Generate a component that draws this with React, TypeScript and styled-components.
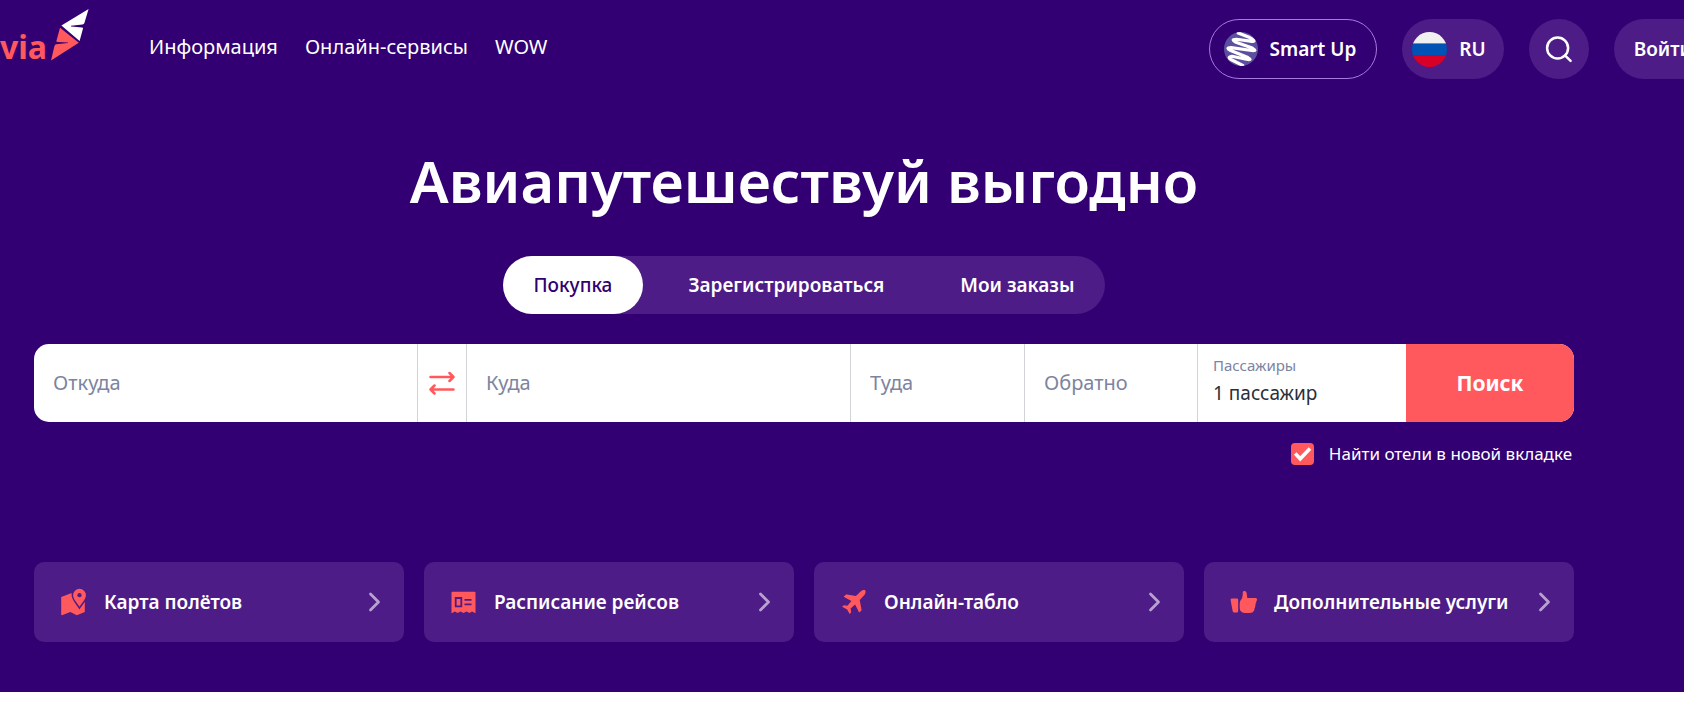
import React, { useState } from "react";
import styled, { createGlobalStyle, css } from "styled-components";

const color = {
  base: "#320072",
  panel: "#4d1c86",
  coral: "#ff595e",
  outline: "#a77be0",
  muted: "#7d84a0",
  line: "#d3d3da",
  ink: "#2b2f38",
};

const GlobalStyle = createGlobalStyle`
  *, *::before, *::after { box-sizing: border-box; }
  body {
    margin: 0;
    background: #fff;
    font-family: "Noto Sans", "Open Sans", sans-serif;
    font-size: 19px;
    line-height: 24px;
    color: #fff;
  }
  button, input { font: inherit; }
  button { border: 0; padding: 0; cursor: pointer; color: inherit; background: none; }
  a { color: inherit; text-decoration: none; }
  svg { display: block; flex: none; }
`;

const Hero = styled.div`
  background: ${color.base};
  overflow: hidden;
  padding-bottom: 50px;
`;

const Header = styled.header`
  display: flex;
  align-items: center;
  margin-right: -28px;
  padding-top: 19px;
  white-space: nowrap;
`;

const Logo = styled.a`
  display: flex;
  align-items: flex-end;
  gap: 4px;
  height: 52px;
  margin: -28px 60px 0 0;
  color: ${color.coral};
  font-size: 32px;
  font-weight: 700;
  line-height: 28px;
`;

const Nav = styled.nav`
  display: flex;
  flex: 1;
  gap: 27px;
  margin-top: -4px;
  font-size: 20px;
`;

const Actions = styled.div`
  display: flex;
  gap: 25px;
`;

const Pill = styled.button<{ $outlined?: boolean; $pad: string }>`
  display: flex;
  align-items: center;
  justify-content: center;
  gap: 12px;
  height: 60px;
  min-width: 60px;
  padding: ${(p) => p.$pad};
  border-radius: 30px;
  font-weight: 600;
  background: ${color.panel};
  ${(p) =>
    p.$outlined &&
    css`
      background: transparent;
      border: 1px solid ${color.outline};
    `}
`;

const Content = styled.main`
  padding: 0 110px 0 34px;
`;

const Title = styled.h1`
  margin: 66px 0 0;
  font-size: 58px;
  line-height: 72px;
  font-weight: 600;
  text-align: center;
`;

const Tabs = styled.div`
  display: flex;
  width: fit-content;
  margin: 39px auto 0;
  border-radius: 29px;
  background: ${color.panel};
`;

const Tab = styled.button<{ $active?: boolean }>`
  height: 58px;
  padding: 0 31px;
  border-radius: 29px;
  font-weight: 600;
  & + & { margin-left: 14px; }
  ${(p) =>
    p.$active &&
    css`
      background: #fff;
      color: ${color.base};
      font-weight: 500;
    `}
`;

const SearchForm = styled.form`
  display: grid;
  grid-template-columns:
    minmax(0, 384fr) 49px minmax(0, 384fr) minmax(0, 174fr) minmax(0, 173fr)
    minmax(0, 208fr) 168px;
  height: 78px;
  margin-top: 30px;
  border-radius: 15px;
  overflow: hidden;
  background: #fff;
`;

const Field = styled.input`
  width: 100%;
  min-width: 0;
  padding: 0 19px;
  border: 0;
  border-right: 1px solid ${color.line};
  outline: 0;
  background: none;
  color: ${color.ink};
  font-size: 20px;
  &::placeholder { color: ${color.muted}; opacity: 1; }
`;

const SwapButton = styled.button`
  display: grid;
  place-items: center;
  border-right: 1px solid ${color.line};
`;

const Passengers = styled.button`
  display: flex;
  flex-direction: column;
  justify-content: center;
  gap: 6px;
  padding: 0 15px 6px;
  text-align: left;
  color: ${color.ink};
`;

const PassengersLabel = styled.span`
  font-size: 15px;
  line-height: 20px;
  color: ${color.muted};
`;

const Submit = styled.button`
  background: ${color.coral};
  font-size: 21px;
  font-weight: 700;
`;

const HotelOption = styled.label`
  display: flex;
  align-items: center;
  gap: 15px;
  width: fit-content;
  margin: 20px 2px 0 auto;
  font-size: 17px;
  cursor: pointer;
`;

const CheckSlot = styled.span`
  display: grid;
  place-items: center;
  & > * { grid-area: 1 / 1; }
  & > svg { pointer-events: none; }
`;

const CheckBox = styled.input`
  appearance: none;
  width: 23px;
  height: 22px;
  margin: 0;
  border-radius: 4px;
  background: #fff;
  &:checked { background: ${color.coral}; }
`;

const Cards = styled.nav`
  display: grid;
  grid-template-columns: repeat(4, minmax(0, 1fr));
  gap: 20px;
  margin-top: 96px;
`;

const Card = styled.a`
  display: flex;
  align-items: center;
  gap: 16px;
  height: 80px;
  padding: 0 23px 0 26px;
  border-radius: 10px;
  background: ${color.panel};
  font-weight: 600;
  white-space: nowrap;
`;

const CardText = styled.span`
  flex: 1;
`;

const LogoMark = () => (
  <svg width="38" height="52" viewBox="51 9 38 52" aria-hidden="true">
    <path fill="#fff" d="M88.6 9 61.4 25.6 79.6 41l3.4-12.600q.2-.9-1-1L71 26.400v-.6l11.500-1.300q1.500-.2 1.900-1.500z" />
    <path fill={color.coral} d="M60 27.700 78.800 42.800 51 60.500l3.400-14.300q.4-1.700 1.900-1.900L68 43v-.6l-10.600-.5q-1.200-.1-1-1z" />
  </svg>
);

const SmartUpMark = () => (
  <svg width="34" height="34" viewBox="0 0 34 34" aria-hidden="true">
    <clipPath id="smart-up-disc">
      <circle cx="17" cy="17" r="17" />
    </clipPath>
    <g clipPath="url(#smart-up-disc)">
      <rect width="34" height="34" fill="#5c4f9f" />
      <path
        d="M12 1.500 24 4.500Q33 8 25 8L11 8Q5 9 11 11L28 14.500Q34 17 28 17L7 17Q1 18 7 20L25 24.500Q30 26.500 25 26.500L9 25.500Q4 27 9 29L21 33"
        fill="none"
        stroke="#fff"
        strokeWidth="3.200"
        strokeLinecap="round"
        strokeLinejoin="round"
        transform="rotate(8 17 17)"
      />
    </g>
  </svg>
);

const RussiaFlag = () => (
  <svg width="35" height="35" viewBox="0 0 35 35" aria-hidden="true">
    <clipPath id="flag-disc">
      <circle cx="17.500" cy="17.500" r="17.500" />
    </clipPath>
    <g clipPath="url(#flag-disc)">
      <rect width="35" height="12" fill="#f0f0f0" />
      <rect y="11.400" width="35" height="12.300" fill="#0052b4" />
      <rect y="23.700" width="35" height="12" fill="#d80027" />
    </g>
  </svg>
);

const SearchIcon = () => (
  <svg width="28" height="28" viewBox="0 0 28 28" fill="none" stroke="#fff" strokeWidth="2.500" strokeLinecap="round" aria-hidden="true">
    <circle cx="12.600" cy="13" r="10.500" />
    <path d="m20.200 20.600 5.400 5.200" />
  </svg>
);

const SwapIcon = () => (
  <svg width="26" height="24" viewBox="0 0 26 24" fill="none" stroke={color.coral} strokeWidth="2.500" strokeLinecap="round" strokeLinejoin="round" aria-hidden="true">
    <path d="M1.500 6H24.500M20.500 2l4 4-4 4M24.500 18.500H1.500M5.500 14.500l-4 4 4 4" />
  </svg>
);

const CheckIcon = () => (
  <svg width="19" height="16" viewBox="0 0 19 16" fill="none" stroke="#fff" strokeWidth="3.600" aria-hidden="true">
    <path d="m2.200 7.600 5 5.200L17 2.600" />
  </svg>
);

const ChevronIcon = () => (
  <svg width="13" height="20" viewBox="0 0 13 20" fill="none" stroke="#b7a2cf" strokeWidth="2.800" strokeLinecap="round" strokeLinejoin="round" aria-hidden="true">
    <path d="m2.500 2 8 8-8 8" />
  </svg>
);

const MapIcon = () => (
  <svg width="28" height="28" viewBox="0 0 28 28" aria-hidden="true">
    <path fill={color.coral} d="M1.200 9 11 5.200 24.800 14V24L16.800 27.200 10.300 24 2 27.200Q1.200 27.200 1.200 26.300z" />
    <path
      fill={color.coral}
      stroke={color.panel}
      strokeWidth="3"
      paintOrder="stroke"
      d="M19.500.8a6.400 6.400 0 0 1 6.400 6.400c0 3.700-3.800 7.600-6.400 11.500-2.600-3.900-6.400-7.800-6.400-11.500A6.400 6.400 0 0 1 19.500.8z"
    />
    <circle cx="19.500" cy="7.200" r="2.100" fill={color.panel} />
  </svg>
);

const ScheduleIcon = () => (
  <svg width="28" height="28" viewBox="0 0 28 28" aria-hidden="true">
    <path fill={color.coral} d="M2.500 3.800H24.500Q25.500 3.800 25.500 4.800V25.200L22 23.400 19.500 25 16.500 23.400 13.500 25 10.500 23.400 7.500 25 5 23.400 1.500 25.200V4.800Q1.500 3.800 2.500 3.800z" />
    <g fill="none" stroke={color.panel} strokeWidth="1.800">
      <path d="M5.700 10H11.300V18.300H5.700zM14.500 11.800H21.500M14.500 16.300H21.500" />
    </g>
  </svg>
);

const PlaneIcon = () => (
  <svg width="28" height="28" viewBox="0 0 28 28" fill={color.coral} aria-hidden="true">
    <path d="M25.200 2.300c.8.900.3 3.300-.8 4.600l-4.700 5.200 1.800 9.400c.1.700-.1 1.100-.5 1.500l-1.900 1.600-4-8.100-4.500 4 .6 3.800-1.500 1.700-2.600-4.600-5-2.600 1.700-1.600 3.600.5 4-4.600-7.700-4.300 1.800-1.900c.4-.4.900-.5 1.500-.4l8.900 1.600 5-4.900c1.300-1.200 3.500-1.600 4.300-.9z" />
  </svg>
);

const ThumbIcon = () => (
  <svg width="28" height="28" viewBox="0 0 28 28" fill={color.coral} aria-hidden="true">
    <path d="M1.600 10.600H6.800Q8.200 10.600 8.200 12V23Q8.200 24.500 6.800 24.500H4.300Q3 24.500 2.700 23.200L.6 12.100Q.4 10.600 1.600 10.600z" />
    <path d="M12.800 4.300C13 2.500 15.800 2.300 16.600 4.700L17.300 9.900H25.800Q27.600 10.100 27 12.200L26.300 13.200Q26.500 14.300 25.600 15.800L25.300 18Q25.300 19.300 24.600 20.300L24.200 22.500Q22.800 25 19.800 25H14.800Q9.700 24.500 9.700 20.300V15.500Q9.800 12.900 11.400 11.300 12.800 9.500 12.800 4.300z" />
  </svg>
);

const navLinks = ["Информация", "Онлайн-сервисы", "WOW"];
const tabs = ["Покупка", "Зарегистрироваться", "Мои заказы"];
const services = [
  { text: "Карта полётов", icon: <MapIcon /> },
  { text: "Расписание рейсов", icon: <ScheduleIcon /> },
  { text: "Онлайн-табло", icon: <PlaneIcon /> },
  { text: "Дополнительные услуги", icon: <ThumbIcon /> },
];

export default function App() {
  const [activeTab, setActiveTab] = useState(0);
  const [hotels, setHotels] = useState(true);

  return (
    <>
      <GlobalStyle />
      <Hero>
        <Header>
          <Logo href="#">
            via
            <LogoMark />
          </Logo>
          <Nav>
            {navLinks.map((text) => (
              <a key={text} href="#">{text}</a>
            ))}
          </Nav>
          <Actions>
            <Pill type="button" $outlined $pad="0 20px 0 14px">
              <SmartUpMark />
              Smart Up
            </Pill>
            <Pill type="button" $pad="0 18px 0 10px">
              <RussiaFlag />
              RU
            </Pill>
            <Pill type="button" $pad="0" aria-label="Поиск по сайту">
              <SearchIcon />
            </Pill>
            <Pill type="button" $pad="0 20px">Войти</Pill>
          </Actions>
        </Header>
        <Content>
          <Title>Авиапутешествуй выгодно</Title>
          <Tabs role="tablist">
            {tabs.map((text, i) => (
              <Tab
                key={text}
                type="button"
                role="tab"
                aria-selected={i === activeTab}
                $active={i === activeTab}
                onClick={() => setActiveTab(i)}
              >
                {text}
              </Tab>
            ))}
          </Tabs>
          <SearchForm onSubmit={(e) => e.preventDefault()}>
            <Field aria-label="Откуда" placeholder="Откуда" />
            <SwapButton type="button" aria-label="Поменять местами">
              <SwapIcon />
            </SwapButton>
            <Field aria-label="Куда" placeholder="Куда" />
            <Field aria-label="Туда" placeholder="Туда" />
            <Field aria-label="Обратно" placeholder="Обратно" />
            <Passengers type="button">
              <PassengersLabel>Пассажиры</PassengersLabel>
              <span>1 пассажир</span>
            </Passengers>
            <Submit type="submit">Поиск</Submit>
          </SearchForm>
          <HotelOption>
            <CheckSlot>
              <CheckBox type="checkbox" checked={hotels} onChange={(e) => setHotels(e.target.checked)} />
              {hotels && <CheckIcon />}
            </CheckSlot>
            Найти отели в новой вкладке
          </HotelOption>
          <Cards>
            {services.map(({ text, icon }) => (
              <Card key={text} href="#">
                {icon}
                <CardText>{text}</CardText>
                <ChevronIcon />
              </Card>
            ))}
          </Cards>
        </Content>
      </Hero>
    </>
  );
}
